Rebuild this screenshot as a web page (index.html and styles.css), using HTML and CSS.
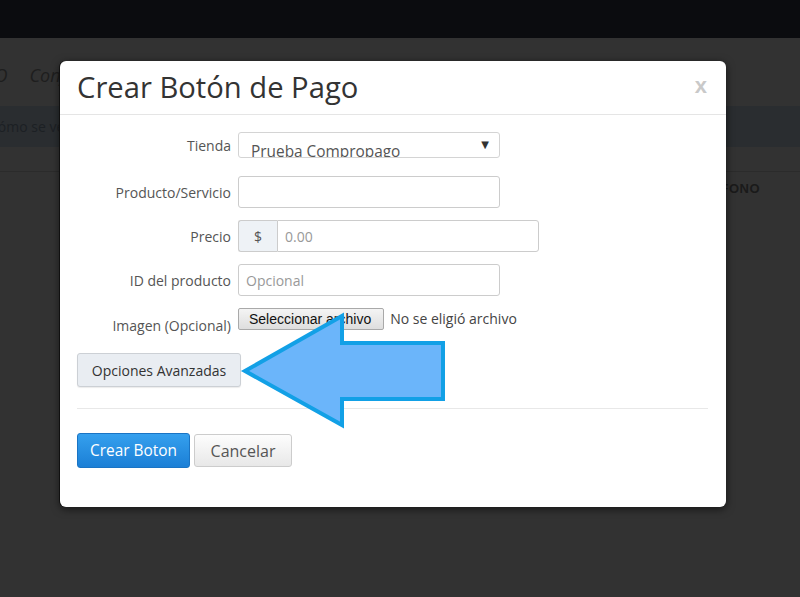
FILE: index.html
```html
<!DOCTYPE html>
<html lang="es">
<head>
<meta charset="utf-8">
<title>Crear Botón de Pago</title>
<link rel="stylesheet" href="styles.css">
</head>
<body>
<div class="page">
  <div class="topbar"></div>
  <div class="subnav">
    <span class="nav-item clip-left">PAGO</span>
    <span class="nav-item">Configuración</span>
  </div>
  <div class="alert"><span class="clip-left2">¿Cómo se ve tu botón?</span></div>
  <div class="table-head">
    <span class="th clip-left3">CORREO</span>
    <span class="th">TELÉFONO</span>
  </div>
</div>

<div class="modal">
  <div class="modal-header">
    <h3 class="modal-title">Crear Botón de Pago</h3>
    <span class="close">x</span>
  </div>
  <div class="modal-body">
    <div class="row">
      <label class="lbl">Tienda</label>
      <div class="select"><span class="select-text">Prueba Compropago</span><span class="caret">▼</span></div>
    </div>
    <div class="row">
      <label class="lbl">Producto/Servicio</label>
      <div class="input"></div>
    </div>
    <div class="row">
      <label class="lbl">Precio</label>
      <div class="group">
        <span class="addon">$</span>
        <div class="input input-wide"><span class="ph">0.00</span></div>
      </div>
    </div>
    <div class="row">
      <label class="lbl">ID del producto</label>
      <div class="input"><span class="ph">Opcional</span></div>
    </div>
    <div class="row row-file">
      <label class="lbl">Imagen (Opcional)</label>
      <div class="file">
        <span class="file-btn">Seleccionar archivo</span>
        <span class="file-none">No se eligió archivo</span>
      </div>
    </div>
    <button class="btn-adv">Opciones Avanzadas</button>
  </div>
  <div class="modal-footer">
    <button class="btn-primary">Crear Boton</button>
    <button class="btn-default">Cancelar</button>
  </div>
</div>

<svg class="arrow" width="220" height="130" viewBox="235 305 220 130" xmlns="http://www.w3.org/2000/svg">
  <polygon points="245,371 342,316 342,343 443,343 443,399 342,399 342,425" fill="#6bb5fa" stroke="#12a0e6" stroke-width="4" stroke-linejoin="miter"/>
</svg>
</body>
</html>
```

FILE: styles.css
```css
* { box-sizing: border-box; }
html, body { margin: 0; padding: 0; }
body {
  width: 800px;
  height: 597px;
  overflow: hidden;
  background: #323232;
  font-family: "Open Sans", "DejaVu Sans", sans-serif;
  position: relative;
}
.page { display: flex; flex-direction: column; }
.topbar { height: 38px; background: #0b0c0f; }
.subnav {
  height: 68px;
  display: flex;
  align-items: center;
  gap: 22px;
  padding-top: 6px;
  overflow: hidden;
  white-space: nowrap;
}
.nav-item {
  font-style: italic;
  font-size: 18px;
  color: #1e1e1e;
}
.clip-left { margin-left: -38px; }
.alert {
  height: 41px;
  background: #2a2d30;
  display: flex;
  align-items: center;
  font-size: 14px;
  color: #1c2024;
  overflow: hidden;
  white-space: nowrap;
}
.clip-left2 { margin-left: -17px; }
.table-head {
  margin-top: 24px;
  border-top: 1px solid #2b2b2b;
  height: 32px;
  display: flex;
  justify-content: space-between;
  align-items: center;
  padding-top: 2px;
  overflow: hidden;
  white-space: nowrap;
}
.th {
  font-family: "Liberation Sans", Arial, sans-serif;
  font-weight: bold;
  font-size: 13px;
  color: #1a1a1a;
  letter-spacing: 0.5px;
}
.clip-left3 { margin-left: -60px; }
.table-head .th:last-child { margin-right: 40px; }

.modal {
  position: absolute;
  left: 60px;
  top: 61px;
  width: 666px;
  height: 446px;
  background: #fff;
  border-radius: 6px;
  box-shadow: 0 2px 8px rgba(0,0,0,0.6), -1px 0 0 #161616;
}
.modal-header {
  height: 54px;
  border-bottom: 1px solid #e5e5e5;
  display: flex;
  align-items: center;
  justify-content: space-between;
  padding: 0 18px 0 17px;
}
.modal-title {
  margin: 0;
  font-weight: normal;
  font-size: 29.2px;
  color: #333;
  padding-bottom: 1px;
}
.close {
  font-family: "Liberation Sans", Arial, sans-serif;
  font-weight: bold;
  font-size: 22px;
  color: #c9c9c9;
  margin-right: 1px;
  margin-bottom: 4px;
}
.modal-body {
  padding: 17px 17px 0 17px;
  display: flex;
  flex-direction: column;
  gap: 12px;
}
.row {
  display: flex;
  align-items: center;
  height: 32px;
  gap: 7px;
}
.row:first-child { align-items: flex-start; }
.lbl {
  width: 154px;
  text-align: right;
  font-size: 14px;
  color: #555;
  white-space: nowrap;
}
.row:first-child .lbl { padding-top: 4px; }
.select {
  width: 262px;
  height: 26px;
  border: 1px solid #d4d4d4;
  border-radius: 3px;
  position: relative;
  overflow: hidden;
  padding-left: 12px;
  padding-top: 9px;
}
.select-text {
  font-size: 15.4px;
  color: #555;
  line-height: 20px;
  display: block;
  white-space: nowrap;
}
.caret {
  position: absolute;
  right: 10px;
  top: 4px;
  font-size: 10px;
  color: #333;
}
.input {
  width: 262px;
  height: 32px;
  border: 1px solid #ccc;
  border-radius: 3px;
  display: flex;
  align-items: center;
  padding-left: 7px;
}
.ph { font-size: 14px; color: #999; }
.group { display: flex; height: 32px; }
.addon {
  width: 39px;
  height: 32px;
  background: #eef2f6;
  border: 1px solid #ccc;
  border-right: none;
  border-radius: 3px 0 0 3px;
  display: flex;
  align-items: center;
  justify-content: center;
  font-size: 14px;
  color: #555;
}
.input-wide { width: 262px; border-radius: 0 3px 3px 0; }
.row-file { height: 32px; align-items: center; }
.row-file .lbl { padding-top: 2px; }
.file { display: flex; align-items: center; gap: 6px; margin-top: -11px; }
.file-btn {
  font-family: "Liberation Sans", Arial, sans-serif;
  font-size: 14px;
  color: #111;
  height: 22px;
  padding: 0 12px 0 10px;
  display: flex;
  align-items: center;
  background: linear-gradient(#f4f4f4, #dedede);
  border: 1px solid #a9a9a9;
  border-radius: 2px;
  white-space: nowrap;
}
.file-none { font-size: 14px; color: #444; white-space: nowrap; }
.btn-adv {
  margin-top: 1px;
  align-self: flex-start;
  width: 164px;
  height: 34px;
  background: #e9edf2;
  border: 1px solid #ccd0d5;
  border-radius: 3px;
  font-family: "Open Sans", sans-serif;
  font-size: 14px;
  color: #333;
  padding: 0;
  box-shadow: 0 1px 1px rgba(0,0,0,0.08);
}
.modal-footer {
  margin: 21px 18px 0 17px;
  border-top: 1px solid #e8e8e8;
  padding-top: 24px;
  display: flex;
  gap: 4px;
}
.btn-primary {
  width: 113px;
  height: 35px;
  border: 1px solid #1a74c4;
  border-radius: 3px;
  background: linear-gradient(#35a0ee, #1b7fd6);
  color: #fff;
  font-family: "Open Sans", sans-serif;
  font-size: 15.4px;
  padding: 0;
}
.btn-default {
  margin-top: 1px;
  width: 98px;
  height: 33px;
  border: 1px solid #ccc;
  border-radius: 3px;
  background: linear-gradient(#fdfdfd, #e8e8e8);
  color: #555;
  font-family: "Open Sans", sans-serif;
  font-size: 16px;
  padding: 0;
}
.arrow {
  position: absolute;
  left: 235px;
  top: 305px;
}
```
